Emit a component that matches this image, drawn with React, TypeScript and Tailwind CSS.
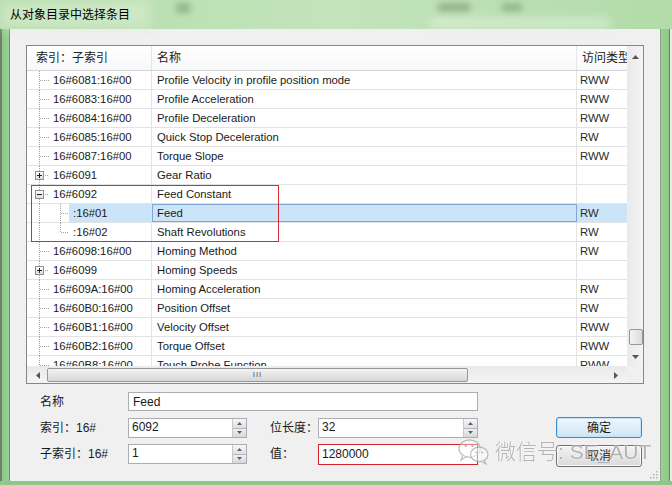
import React from "react";

type Row = {
  k: "leaf" | "plus" | "minus" | "child" | "lastchild";
  idx: string;
  name: string;
  acc: string;
  sel?: boolean;
};

const rows: Row[] = [
  { k: "leaf", idx: "16#6081:16#00", name: "Profile Velocity in profile position mode", acc: "RWW" },
  { k: "leaf", idx: "16#6083:16#00", name: "Profile Acceleration", acc: "RWW" },
  { k: "leaf", idx: "16#6084:16#00", name: "Profile Deceleration", acc: "RWW" },
  { k: "leaf", idx: "16#6085:16#00", name: "Quick Stop Deceleration", acc: "RW" },
  { k: "leaf", idx: "16#6087:16#00", name: "Torque Slope", acc: "RWW" },
  { k: "plus", idx: "16#6091", name: "Gear Ratio", acc: "" },
  { k: "minus", idx: "16#6092", name: "Feed Constant", acc: "" },
  { k: "child", idx: ":16#01", name: "Feed", acc: "RW", sel: true },
  { k: "lastchild", idx: ":16#02", name: "Shaft Revolutions", acc: "RW" },
  { k: "leaf", idx: "16#6098:16#00", name: "Homing Method", acc: "RW" },
  { k: "plus", idx: "16#6099", name: "Homing Speeds", acc: "" },
  { k: "leaf", idx: "16#609A:16#00", name: "Homing Acceleration", acc: "RW" },
  { k: "leaf", idx: "16#60B0:16#00", name: "Position Offset", acc: "RW" },
  { k: "leaf", idx: "16#60B1:16#00", name: "Velocity Offset", acc: "RWW" },
  { k: "leaf", idx: "16#60B2:16#00", name: "Torque Offset", acc: "RWW" },
  { k: "leaf", idx: "16#60B8:16#00", name: "Touch Probe Function", acc: "RWW" },
];

const DOT = { stroke: "#a3a3a3", strokeWidth: 1, strokeDasharray: "1 1" };

function TreeGlyph({ k }: { k: Row["k"] }) {
  if (k === "child" || k === "lastchild") {
    return (
      <svg width="42" height="19" className="shrink-0">
        <line x1="12.5" y1="0" x2="12.5" y2="19" {...DOT} />
        <line x1="33.5" y1="0" x2="33.5" y2={k === "child" ? 19 : 10} {...DOT} />
        <line x1="34" y1="9.5" x2="42" y2="9.5" {...DOT} />
      </svg>
    );
  }
  return (
    <svg width="22" height="19" className="shrink-0">
      <defs>
        <linearGradient id="bx" x1="0" y1="0" x2="0" y2="1">
          <stop offset="0" stopColor="#ffffff" />
          <stop offset="1" stopColor="#dcdcdc" />
        </linearGradient>
      </defs>
      <line x1="12.5" y1="0" x2="12.5" y2="19" {...DOT} />
      {k === "leaf" ? (
        <line x1="13" y1="9.5" x2="22" y2="9.5" {...DOT} />
      ) : (
        <>
          <rect x="8.5" y="5.5" width="8" height="8" fill="url(#bx)" stroke="#8f8f8f" />
          <line x1="10" y1="9.5" x2="15" y2="9.5" stroke="#1f1f1f" />
          {k === "plus" && <line x1="12.5" y1="7" x2="12.5" y2="12" stroke="#1f1f1f" />}
          <line x1="18" y1="9.5" x2="22" y2="9.5" {...DOT} />
        </>
      )}
    </svg>
  );
}

function ListRow({ r }: { r: Row }) {
  return (
    <div className="flex h-[19px] shrink-0 border-b border-[#e3e3e3] text-[11.3px] leading-[18px] text-[#1a1a1a]">
      <div className="flex w-[125px] shrink-0 border-r border-[#e3e3e3]">
        <TreeGlyph k={r.k} />
        <div className={`flex-1 pl-[4px] whitespace-nowrap ${r.sel ? "bg-[#cce4f8]" : ""}`}>{r.idx}</div>
      </div>
      <div
        className={`w-[425px] shrink-0 whitespace-nowrap ${
          r.sel ? "border border-[#7ea6d6] bg-[#cce4f8] pl-[4px] leading-[16px]" : "border-r border-[#e3e3e3] pl-[5px]"
        }`}
      >
        {r.name}
      </div>
      <div className={`w-[80px] shrink-0 pl-[3px] text-[#2a2a2a] ${r.sel ? "bg-[#cce4f8]" : ""}`}>{r.acc}</div>
    </div>
  );
}

function Arrow({ dir }: { dir: "up" | "down" | "left" | "right" }) {
  const pts =
    dir === "up"
      ? "0,4 3.5,0 7,4"
      : dir === "down"
      ? "0,0 3.5,4 7,0"
      : dir === "left"
      ? "4,0 0,3.5 4,7"
      : "0,0 4,3.5 0,7";
  const w = dir === "up" || dir === "down" ? 7 : 4;
  const h = dir === "up" || dir === "down" ? 4 : 7;
  return (
    <svg width={w} height={h}>
      <polygon points={pts} fill="#555" />
    </svg>
  );
}

function Spin() {
  return (
    <div className="flex w-[14px] shrink-0 flex-col border-l border-[#c8c8c8]">
      <div className="flex flex-1 items-center justify-center border-b border-[#b5b5b5] bg-gradient-to-b from-[#f7f7f7] to-[#e0e0e0]">
        <svg width="5" height="3"><polygon points="0,3 2.5,0 5,3" fill="#4d6185" /></svg>
      </div>
      <div className="flex flex-1 items-center justify-center bg-gradient-to-b from-[#f0f0f0] to-[#d8d8d8]">
        <svg width="5" height="3"><polygon points="0,0 2.5,3 5,0" fill="#4d6185" /></svg>
      </div>
    </div>
  );
}

export default function App() {
  return (
    <div className="relative h-[485px] w-[672px] overflow-hidden bg-[#8dc887] font-['Liberation_Sans','Noto_Sans_CJK_SC',sans-serif] text-[#1a1a1a]">
      {/* title bar */}
      <div className="relative flex h-[29px] items-center bg-gradient-to-r from-[#b4dcaa] via-[#c4e4bc] to-[#b2dba9] pl-[10px] text-[12px] text-black">
        <div className="absolute left-0 top-0 h-[29px] w-[150px] bg-[#d8eed2]/60 blur-[6px]" />
        <div className="absolute left-[176px] top-[3px] h-[10px] w-[14px] bg-[#6b8a66]/50 blur-[3px]" />
        <div className="absolute left-[438px] top-[3px] h-[9px] w-[32px] bg-[#6b8a66]/50 blur-[3px]" />
        <div className="absolute left-[502px] top-[3px] h-[9px] w-[20px] bg-[#6b8a66]/45 blur-[3px]" />
        <div className="absolute left-[430px] top-[18px] h-[10px] w-[180px] bg-[#e6f3e2]/60 blur-[5px]" />
        <span className="relative">从对象目录中选择条目</span>
      </div>

      {/* body */}
      <div className="flex h-[456px]">
        <div className="flex h-[452px] w-[10px] shrink-0">
          <div className="w-[2px] bg-[#6f7d6d]" />
          <div className="w-[7px] bg-gradient-to-r from-[#8ec788] to-[#99d093]" />
          <div className="w-[1px] bg-[#6b8f67]" />
        </div>

        <div className="flex h-[452px] w-[651px] shrink-0 flex-col border-r border-[#8aa886] bg-[#f0f0f0] pl-[16px] pt-[16px]">
          {/* list view */}
          <div className="flex h-[339px] w-[618px] flex-col border border-[#828790] bg-white">
            <div className="flex h-[320px]">
              <div className="flex w-[600px] flex-col overflow-hidden">
                {/* header */}
                <div className="flex h-[25px] shrink-0 border-b border-[#d5d5d5] bg-gradient-to-b from-white to-[#f7f8fa] text-[12px] leading-[24px] text-[#222]">
                  <div className="w-[125px] shrink-0 border-r border-[#e3e5e8] pl-[9px]">索引：子索引</div>
                  <div className="w-[425px] shrink-0 border-r border-[#e3e5e8] pl-[5px]">名称</div>
                  <div className="w-[80px] shrink-0 whitespace-nowrap pl-[5px]">访问类型</div>
                </div>
                <div className="flex flex-col">
                  {rows.map((r, i) => (
                    <ListRow key={i} r={r} />
                  ))}
                </div>
              </div>
              {/* vertical scrollbar */}
              <div className="flex w-[16px] flex-col border-l border-[#ececec] bg-gradient-to-r from-[#eaeaea] to-[#f4f4f4]">
                <div className="flex h-[17px] items-center justify-center pt-[4px]">
                  <Arrow dir="up" />
                </div>
                <div className="h-[266px]" />
                <div className="mx-auto h-[16px] w-[14px] rounded-[2px] border border-[#979797] bg-gradient-to-r from-[#f3f3f3] to-[#dcdcdc]" />
                <div className="flex h-[20px] items-center justify-center pt-[4px]">
                  <Arrow dir="down" />
                </div>
              </div>
            </div>
            {/* horizontal scrollbar */}
            <div className="flex h-[17px]">
              <div className="flex w-[600px] items-center border-t border-[#ececec] bg-gradient-to-b from-[#eaeaea] to-[#f4f4f4]">
                <div className="flex w-[20px] justify-center pl-[1px]">
                  <Arrow dir="left" />
                </div>
                <div className="flex h-[14px] w-[421px] items-center justify-center rounded-[2px] border border-[#979797] bg-gradient-to-b from-[#f4f4f4] to-[#d6d6d6]">
                  <span className="text-[8px] leading-none tracking-[1px] text-[#555]">III</span>
                </div>
                <div className="flex-1" />
                <div className="flex w-[20px] justify-center pr-[2px]">
                  <Arrow dir="right" />
                </div>
              </div>
              <div className="w-[16px] bg-[#f0f0f0]" />
            </div>
          </div>

          {/* form */}
          <div className="mt-[8px] flex">
            <div className="ml-[14px] flex flex-col text-[12px]">
              <div className="flex h-[19px] items-center">
                <div className="w-[88px] whitespace-nowrap">名称</div>
                <div className="flex h-[19px] w-[350px] items-center border border-[#abadb3] bg-white pl-[4px]">Feed</div>
              </div>
              <div className="mt-[7px] flex h-[20px] items-center">
                <div className="w-[88px] whitespace-nowrap">索引：16#</div>
                <div className="flex h-[20px] w-[119px] border border-[#abadb3] bg-white">
                  <div className="flex-1 pl-[3px] leading-[16px]">6092</div>
                  <Spin />
                </div>
                <div className="ml-[23px] w-[48px] whitespace-nowrap">位长度：</div>
                <div className="flex h-[20px] w-[160px] border border-[#abadb3] bg-white">
                  <div className="flex-1 pl-[3px] leading-[16px]">32</div>
                  <Spin />
                </div>
              </div>
              <div className="mt-[6px] flex h-[20px] items-center">
                <div className="w-[88px] whitespace-nowrap">子索引：16#</div>
                <div className="flex h-[20px] w-[119px] border border-[#abadb3] bg-white">
                  <div className="flex-1 pl-[3px] leading-[16px]">1</div>
                  <Spin />
                </div>
                <div className="ml-[23px] w-[48px] whitespace-nowrap">值：</div>
                <div className="flex h-[21px] w-[160px] items-center border border-[#d0232f] bg-white pl-[3px]">1280000</div>
              </div>
            </div>
            <div className="ml-[78px] flex flex-col pt-[25px] text-[12px]">
              <div className="flex h-[21px] w-[86px] items-center justify-center rounded-[3px] border border-[#3c8cc8] bg-gradient-to-b from-[#eef7fd] to-[#cfe5f4] shadow-[inset_0_0_0_1px_#bfe3f9]">
                确定
              </div>
              <div className="mt-[7px] flex h-[22px] w-[86px] items-center justify-center rounded-[3px] border border-[#707070] bg-gradient-to-b from-[#f3f3f3] to-[#dadada] shadow-[inset_0_0_0_1px_#fbfbfb]">
                取消
              </div>
            </div>
          </div>
          <div className="flex-1" />
          <div className="flex justify-end pb-[2px] pr-[2px]">
            <svg width="10" height="10">
              {[
                [8, 2],
                [5, 5],
                [8, 5],
                [2, 8],
                [5, 8],
                [8, 8],
              ].map(([x, y], i) => (
                <rect key={i} x={x} y={y} width="1.5" height="1.5" fill="#b0b0b0" />
              ))}
            </svg>
          </div>
        </div>

        <div className="flex h-[452px] w-[11px] shrink-0">
          <div className="w-[8px] bg-gradient-to-r from-[#99d093] to-[#8ec788]" />
          <div className="w-[1px] bg-[#6f7d6d]" />
          <div className="w-[2px] bg-[#e8ece8]" />
        </div>
      </div>

      {/* red annotation box on the tree */}
      <div className="pointer-events-none absolute left-[31px] top-[185px] h-[57px] w-[248px] border border-[#d42c3a]" />

      {/* watermark */}
      <div className="pointer-events-none absolute left-[457px] top-[437px] flex items-center gap-[5px] opacity-80">
        <svg width="33" height="29" viewBox="0 0 34 30">
          <ellipse cx="13" cy="12" rx="11" ry="9" fill="white" fillOpacity="0.5" stroke="#a9a9a9" strokeWidth="1.2" />
          <path d="M6 19 L4 24 L10 20" fill="white" fillOpacity="0.5" stroke="#a9a9a9" strokeWidth="1.2" />
          <ellipse cx="23" cy="18" rx="9" ry="7.5" fill="white" fillOpacity="0.6" stroke="#a9a9a9" strokeWidth="1.2" />
          <path d="M28 24 L30 28 L25 25" fill="white" fillOpacity="0.5" stroke="#a9a9a9" strokeWidth="1.2" />
          <circle cx="9" cy="9" r="1.3" fill="#a9a9a9" />
          <circle cx="16" cy="9" r="1.3" fill="#a9a9a9" />
          <circle cx="20" cy="16" r="1" fill="#a9a9a9" />
          <circle cx="26" cy="16" r="1" fill="#a9a9a9" />
        </svg>
        <span className="whitespace-nowrap text-[21px] font-light leading-none text-[#a4a4a4] [text-shadow:0_0_2px_#ffffff,0_0_1px_#ffffff]">
          微信号: SE_AUT
        </span>
      </div>
    </div>
  );
}
